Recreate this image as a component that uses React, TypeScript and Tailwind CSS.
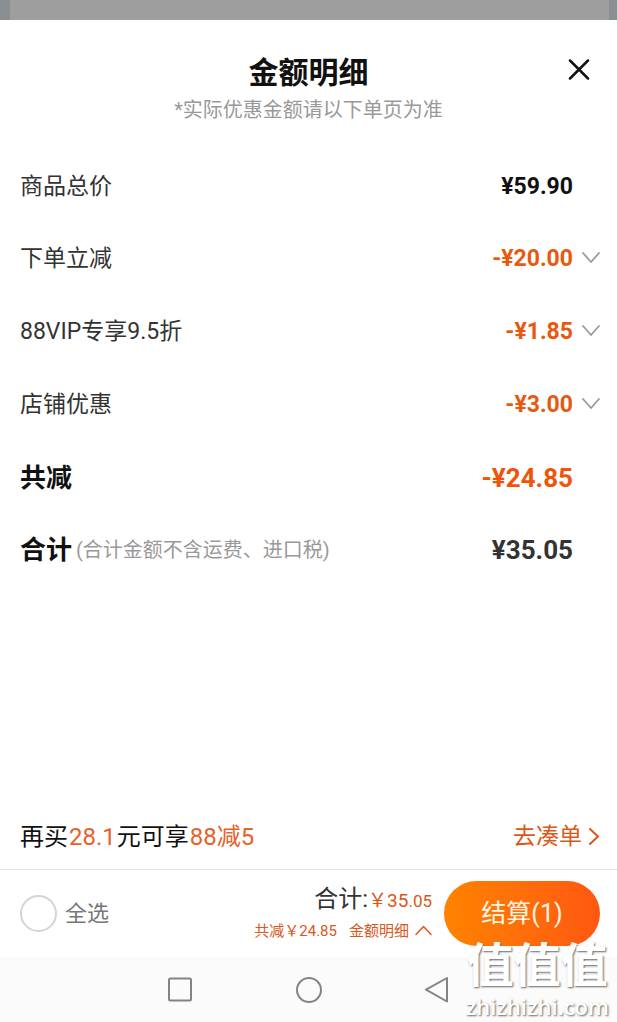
import React from 'react';

const discounts = [
  { label: '下单立减', amount: '-¥20.00' },
  { label: '88VIP专享9.5折', amount: '-¥1.85' },
  { label: '店铺优惠', amount: '-¥3.00' },
];

const Chevron: React.FC<{ className: string; d: string; width: number; height: number }> = ({ className, d, width, height }) => (
  <svg className={className} width={width} height={height} fill="none" stroke="currentColor" strokeLinecap="round" strokeLinejoin="round" aria-hidden="true">
    <path d={d} />
  </svg>
);

const PriceDetails: React.FC = () => (
  <main className="flex-1 flex flex-col bg-white">
    <header className="relative pt-8 pb-[25px] text-center">
      <h1 className="text-[30px] leading-[42px] font-bold text-[#111]">金额明细</h1>
      <p className="text-[20px] leading-8 text-[#999]">*实际优惠金额请以下单页为准</p>
      <button type="button" aria-label="关闭" className="absolute right-[23px] top-8 p-1 text-[#111]">
        <svg width="22" height="24" viewBox="0 0 22 24" fill="none" stroke="currentColor" strokeWidth="2.5" strokeLinecap="round" aria-hidden="true">
          <path d="M2 4.5 20 22.5M20 4.5 2 22.5" />
        </svg>
      </button>
    </header>

    <div className="pl-5 pr-[17px] text-[23px] text-[#333]">
      <div className="flex items-center justify-between h-[72px]">
        <span>商品总价</span>
        <span className="mr-[27px] font-bold text-[#111]">¥59.90</span>
      </div>
      {discounts.map((item) => (
        <button key={item.label} type="button" className="flex items-center justify-between w-full h-[73px]">
          <span>{item.label}</span>
          <span className="flex items-center gap-[9px]">
            <span className="font-bold text-[#e8590f]">{item.amount}</span>
            <Chevron className="text-[#999] stroke-[1.8]" width={18} height={16} d="M1 1 9 10 17 1" />
          </span>
        </button>
      ))}
      <div className="flex items-center justify-between h-[72px] text-[26px] font-bold">
        <span className="text-[#111]">共减</span>
        <span className="mr-[27px] text-[#f05409]">-¥24.85</span>
      </div>
      <div className="flex items-center justify-between h-[72px] text-[26px] font-bold">
        <span className="flex items-center gap-1 text-[#111]">
          合计
          <small className="text-[20px] font-normal text-[#999]">(合计金额不含运费、进口税)</small>
        </span>
        <span className="mr-[27px]">¥35.05</span>
      </div>
    </div>

    <div className="mt-auto flex items-center justify-between h-16 pl-5 pr-[17px] text-[24px] text-[#111]">
      <p>
        再买<span className="mx-px text-[#e5622a]">28.1</span>元可享<span className="mx-px text-[#e5622a]">88减5</span>
      </p>
      <a href="#coudan" className="flex items-center gap-1.5 text-[23px] text-[#dc5818]">
        去凑单
        <Chevron className="stroke-2" width={12} height={18} d="M2 1 10 8.5 2 16" />
      </a>
    </div>
  </main>
);

const CheckoutBar: React.FC = () => (
  <footer className="flex items-center h-[88px] pl-5 pr-[17px] border-t border-[#e5e5e5] bg-white">
    <label className="flex items-center gap-2 text-[22px] text-[#777]">
      <input type="checkbox" className="appearance-none size-[37px] rounded-full border-2 border-[#d4d4d4] bg-white" />
      全选
    </label>
    <div className="ml-auto mr-3 flex flex-col items-end text-[#d9581c]">
      <p className="flex items-baseline text-[19px] leading-8">
        <span className="text-[24px] text-[#333]">合计:</span>
        <span>￥35</span>
        <span className="text-[17px]">.05</span>
      </p>
      <div className="flex items-center gap-3 text-[15px] leading-7">
        <span>共减￥24.85</span>
        <button type="button" className="flex items-center gap-1.5">
          金额明细
          <Chevron className="stroke-[1.5]" width={17} height={11} d="M1 9.5 8.5 1.5 16 9.5" />
        </button>
      </div>
    </div>
    <button type="button" className="w-[156px] h-[65px] rounded-full bg-linear-to-r from-[#ff8200] to-[#ff5711] text-[25px] text-[#fff6e0]">
      结算(1)
    </button>
  </footer>
);

const SystemNav: React.FC = () => (
  <nav className="relative flex items-center justify-center gap-[102px] h-[65px] bg-[#fbfbfb] text-[#848484]">
    <button type="button" aria-label="最近任务">
      <svg width="26" height="26" fill="none" stroke="currentColor" strokeWidth="2" aria-hidden="true">
        <rect x="1" y="1.5" width="22" height="22" rx="1.5" />
      </svg>
    </button>
    <button type="button" aria-label="主屏幕">
      <svg width="26" height="26" fill="none" stroke="currentColor" strokeWidth="2" aria-hidden="true">
        <circle cx="13" cy="13" r="12" />
      </svg>
    </button>
    <button type="button" aria-label="返回">
      <svg width="26" height="26" fill="none" stroke="currentColor" strokeWidth="2" strokeLinejoin="round" aria-hidden="true">
        <path d="M23 1V24.5L2 12.7Z" />
      </svg>
    </button>
    <div className="absolute right-2 bottom-1 text-center text-white text-shadow-[1px_1px_2px_#666]">
      <div className="text-[47px] leading-[56px] font-bold">值值值</div>
      <div className="font-['Open_Sans',sans-serif] text-[22px] leading-6 font-semibold">zhizhizhi.com</div>
    </div>
  </nav>
);

export default function App() {
  return (
    <div className="flex flex-col min-h-screen bg-white font-[Roboto,'Noto_Sans_CJK_SC',sans-serif]">
      <div className="h-5 border-l-10 border-r-8 border-[#8a9092] bg-[#9e9e9e]" />
      <PriceDetails />
      <CheckoutBar />
      <SystemNav />
    </div>
  );
}
